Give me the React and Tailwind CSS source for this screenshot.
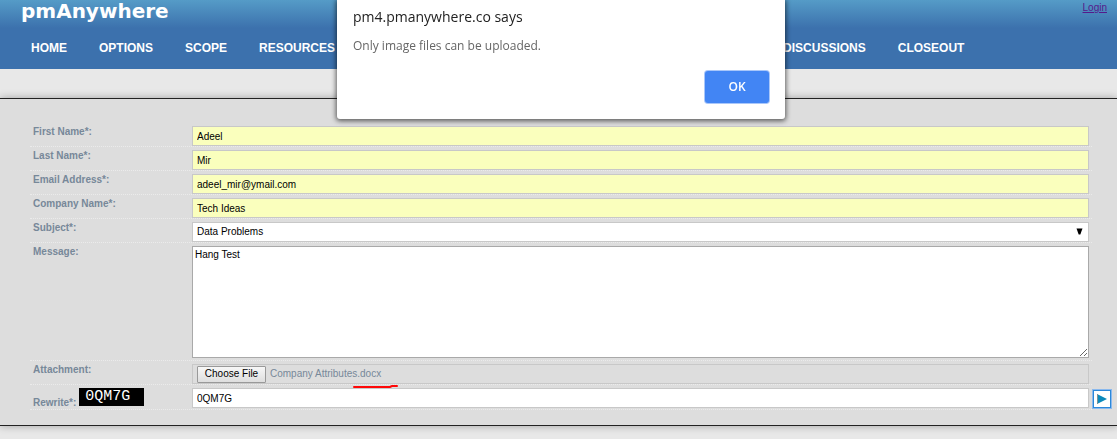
import React, { useRef, useState } from 'react';

const primaryLinks = ['HOME', 'OPTIONS', 'SCOPE', 'RESOURCES'];
const secondaryLinks = ['DISCUSSIONS', 'CLOSEOUT'];

const textFields = [
    { id: 'firstName', label: 'First Name*:', value: 'Adeel', type: 'text' },
    { id: 'lastName', label: 'Last Name*:', value: 'Mir', type: 'text' },
    { id: 'email', label: 'Email Address*:', value: 'adeel_mir@ymail.com', type: 'email' },
    { id: 'company', label: 'Company Name*:', value: 'Tech Ideas', type: 'text' }
];

const NavLinks = ({ links }) => (
    <ul className="flex gap-8">
        {links.map((link) => (
            <li key={link}>
                <a href="#" className="whitespace-nowrap">{link}</a>
            </li>
        ))}
    </ul>
);

const Row = ({ id, label, children, extra, className = '' }) => (
    <div className={`flex border-b border-dotted border-[#ebebeb] pt-[3px] pr-[3px] ${className}`}>
        <div className="flex w-[162px] shrink-0 items-start gap-[3px] pl-[3px]">
            <label htmlFor={id} className="font-bold text-[#778899]">{label}</label>
            {extra}
        </div>
        <div className="min-w-0 flex-1">{children}</div>
    </div>
);

const Header = () => (
    <header className="h-[69px] bg-[linear-gradient(to_bottom,#559bc7_0px,#3c71ad_28px)]">
        <div className="flex h-[37px] items-start justify-between pl-[21px] pr-[10px]">
            <a href="#" className="font-['DejaVu_Sans'] text-[20px] leading-[23px] font-bold text-white">pmAnywhere</a>
            <a href="#" className="text-[10px] leading-[16px] text-[#551a8b] underline">Login</a>
        </div>
        <nav className="flex pl-[31px] text-[12px] leading-[22px] font-bold text-white">
            <NavLinks links={primaryLinks} />
            <div className="ml-[448px]">
                <NavLinks links={secondaryLinks} />
            </div>
        </nav>
    </header>
);

const AlertDialog = ({ onClose }) => (
    <div className="pointer-events-none fixed inset-x-0 top-0 z-10 flex justify-center pl-[5px]">
        <div role="alertdialog" aria-labelledby="alert-title" className="pointer-events-auto w-[448px] rounded-b-[3px] bg-white px-4 pt-[6px] pb-4 font-['Open_Sans',sans-serif] shadow-[0_1px_5px_1px_rgba(0,0,0,0.6)]">
            <h2 id="alert-title" className="text-[14px] leading-[22px] text-[#222]">pm4.pmanywhere.co says</h2>
            <p className="mt-2 text-[12px] leading-[20px] text-[#666]">Only image files can be uploaded.</p>
            <div className="mt-[15px] flex justify-end">
                <button type="button" onClick={onClose} className="h-8 w-16 rounded-[3px] bg-[#4285f4] text-[12px] font-semibold text-white shadow-[0_0_0_1px_#a9c7fa]">OK</button>
            </div>
        </div>
    </div>
);

const ContactForm = () => {
    const fileRef = useRef(null);

    return (
        <form onSubmit={(e) => e.preventDefault()} className="pt-6 pr-[6px] pb-[15px] pl-[30px] text-[10px] leading-[12px]">
            <div className="mr-[19px]">
                {textFields.map((field) => (
                    <Row key={field.id} id={field.id} label={field.label}>
                        <input id={field.id} type={field.type} defaultValue={field.value} className="block h-5 w-full border border-[#c8c8c8] bg-[#faffbd] px-1 text-black outline-none" />
                    </Row>
                ))}
                <Row id="subject" label="Subject*:">
                    <div className="relative">
                        <select id="subject" className="block h-5 w-full appearance-none border border-[#c8c8c8] bg-white px-1 text-black outline-none">
                            <option>Data Problems</option>
                        </select>
                        <svg className="pointer-events-none absolute top-[6px] right-[6px] h-[7px] w-[7px]" viewBox="0 0 7 7">
                            <path d="M0.5 0.5H6.5L4.3 6.5H2.7Z" fill="#000" />
                        </svg>
                    </div>
                </Row>
                <Row id="message" label="Message:" className="pb-[2px]">
                    <textarea id="message" defaultValue="Hang Test" className="block h-28 w-full resize-y border border-[#a9a9a9] bg-white px-[2px] py-[2px] text-black outline-none" />
                </Row>
                <Row id="attachment" label="Attachment:">
                    <div className="relative flex h-5 items-center gap-1 border border-[#c8c8c8] px-1">
                        <input ref={fileRef} type="file" aria-label="Attachment" tabIndex={-1} className="hidden" />
                        <button id="attachment" type="button" onClick={() => fileRef.current.click()} className="h-[17px] w-[69px] shrink-0 rounded-[1px] border border-[#999] bg-linear-to-b from-[#f7f7f7] to-[#dedede] text-black">Choose File</button>
                        <span className="text-[#778899]">Company Attributes.docx</span>
                        <svg className="pointer-events-none absolute top-[18px] left-[160px] h-[6px] w-[48px]" viewBox="0 0 48 6">
                            <path d="M1 4H37L39 3H44" fill="none" stroke="#ff0808" strokeWidth="2" strokeLinecap="round" />
                        </svg>
                    </div>
                </Row>
            </div>
            <div className="flex gap-px">
                <Row
                    id="rewrite"
                    label="Rewrite*:"
                    className="flex-1 [&_label]:mt-[9px]"
                    extra={<span className="flex h-[18px] w-[65px] items-center bg-black pl-[6px] font-['Liberation_Mono',monospace] text-[15px] text-white">0QM7G</span>}
                >
                    <input id="rewrite" type="text" defaultValue="0QM7G" className="block h-5 w-full border border-[#c8c8c8] bg-white px-1 text-black outline-none" />
                </Row>
                <button type="submit" aria-label="Submit" className="mt-[5px] flex h-[18px] w-[18px] shrink-0 items-center justify-center border border-[#2b88d9] bg-white shadow-[0_0_0_1px_#8ab9ee]">
                    <svg className="h-[10px] w-[10px]" viewBox="0 0 10 10">
                        <path d="M0 0L10 5L0 10Z" fill="#0a8abb" />
                        <path d="M0.5 0V10" stroke="#7d9298" strokeWidth="1" />
                    </svg>
                </button>
            </div>
        </form>
    );
};

const App = () => {
    const [alertOpen, setAlertOpen] = useState(true);

    return (
        <div className="min-h-screen bg-[#e8e8e8] font-['Liberation_Sans',Arial,sans-serif]">
            <Header />
            <main className="mt-[29px] border-y border-[#222] bg-[#ddd] shadow-[0_0_8px_rgba(0,0,0,0.3)]">
                <ContactForm />
            </main>
            {alertOpen && <AlertDialog onClose={() => setAlertOpen(false)} />}
        </div>
    );
};

export default App;
